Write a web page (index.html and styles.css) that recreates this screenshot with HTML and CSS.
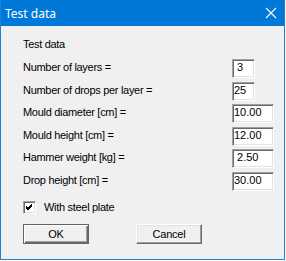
FILE: index.html
```html
<!DOCTYPE html>
<html lang="en">
<head>
  <meta charset="UTF-8">
  <title>Test data</title>
  <link rel="stylesheet" href="styles.css">
</head>
<body>
  <div class="window">
    <div class="titlebar">
      <span class="title">Test data</span>
      <svg class="close" width="12" height="12" viewBox="0 0 12 12">
        <path d="M1 1 L11 11 M11 1 L1 11" stroke="#fff" stroke-width="1.1" fill="none"/>
      </svg>
    </div>
    <div class="content">
      <div class="heading">Test data</div>
      <div class="fields">
        <span class="label">Number of layers =</span><span class="box narrow"> 3</span>
        <span class="label">Number of drops per layer =</span><span class="box narrow">25</span>
        <span class="label">Mould diameter [cm] =</span><span class="box">10.00</span>
        <span class="label">Mould height [cm] =</span><span class="box">12.00</span>
        <span class="label">Hammer weight [kg] =</span><span class="box"> 2.50</span>
        <span class="label">Drop height [cm] =</span><span class="box">30.00</span>
      </div>
      <div class="check">
        <span class="checkbox">
          <svg width="9" height="9" viewBox="0 0 9 9">
            <path d="M1 4 L3 6 L7 2 M1 5 L3 7 L7 3 M1 3 L3 5 L7 1" stroke="#000" stroke-width="1" fill="none"/>
          </svg>
        </span>
        <span>With steel plate</span>
      </div>
      <div class="buttons">
        <button class="btn default">OK</button>
        <button class="btn">Cancel</button>
      </div>
    </div>
  </div>
</body>
</html>
```

FILE: styles.css
```css
body {
  margin: 0;
  background: #ffffff;
  font-family: "Liberation Sans", Arial, sans-serif;
  font-size: 11px;
  color: #000;
}
.window {
  width: 285px;
  height: 260px;
  box-sizing: border-box;
  border: 1px solid #1883d7;
  border-top: none;
  background: #f0f0f0;
}
.titlebar {
  height: 26px;
  background: #0078d7;
  display: flex;
  align-items: center;
  justify-content: space-between;
  padding: 0 7px 0 4px;
}
.title {
  font-family: "Noto Sans", "Open Sans", sans-serif;
  font-size: 12px;
  color: #fff;
}
.close {
  display: block;
}
.content {
  padding: 12px 10px 0 22px;
  letter-spacing: -0.3px;
}
.heading {
  line-height: 13px;
  margin-bottom: 8px;
}
.fields {
  display: grid;
  grid-template-columns: 1fr 42px;
  row-gap: 3.6px;
}
.label {
  line-height: 17px;
  align-self: start;
}
.box {
  display: block;
  height: 19px;
  box-sizing: border-box;
  background: #fff;
  border: 1px solid;
  border-color: #a0a0a0 #fff #fff #a0a0a0;
  box-shadow: inset 1px 1px 0 #696969, inset -1px -1px 0 #e3e3e3;
  padding: 1px 0 0 1px;
  line-height: 12px;
  white-space: pre;
  letter-spacing: 0;
}
.box.narrow {
  width: 23px;
}
.check {
  display: flex;
  align-items: center;
  margin-top: 10px;
  gap: 8px;
}
.checkbox {
  width: 13px;
  height: 13px;
  box-sizing: border-box;
  background: #fff;
  border: 1px solid;
  border-color: #a0a0a0 #fff #fff #a0a0a0;
  box-shadow: inset 1px 1px 0 #696969, inset -1px -1px 0 #e3e3e3;
  display: flex;
  align-items: center;
  justify-content: center;
}
.checkbox svg {
  display: block;
  margin: 1px 0 0 0;
}
.buttons {
  display: flex;
  gap: 47px;
  margin-top: 10px;
}
.btn {
  width: 66px;
  height: 20px;
  box-sizing: border-box;
  padding: 0;
  font-family: "Liberation Sans", Arial, sans-serif;
  font-size: 11px;
  letter-spacing: -0.2px;
  color: #000;
  background: #f0f0f0;
  border: 1px solid;
  border-color: #fff #696969 #696969 #fff;
  box-shadow: inset -1px -1px 0 #a0a0a0, inset 1px 1px 0 #e3e3e3;
}
.btn.default {
  border-color: #646464;
  box-shadow: inset 1px 1px 0 #fff, inset -1px -1px 0 #696969, inset -2px -2px 0 #a0a0a0;
}
```
